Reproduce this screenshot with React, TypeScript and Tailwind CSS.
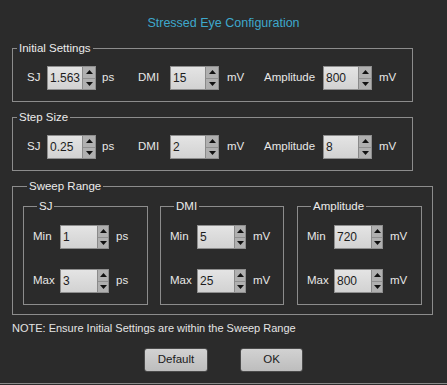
import React from 'react'

const font = { fontFamily: '"Liberation Sans", Arial, sans-serif' }

const Arrow = ({ down }: { down?: boolean }) => (
  <svg width="7" height="4" viewBox="0 0 7 4">
    {down ? <polygon points="0,0 7,0 3.5,4" fill="#111" /> : <polygon points="0,4 7,4 3.5,0" fill="#111" />}
  </svg>
)

// spin box: text part + up/down buttons
const Spin = ({ value, small }: { value: string; small?: boolean }) => (
  <div className="flex h-[24px] w-[49px] border border-[#8e8e8e]">
    <div className="flex flex-1 items-center bg-gradient-to-b from-[#e4e4e4] to-[#d2d2d2] pl-[2px] text-[12px] text-[#1c1c1c]">
      {value}
    </div>
    <div className={`flex flex-col border-l border-[#8a8a8a] bg-[#b0b0b0] ${small ? 'w-[11px]' : 'w-[13px]'}`}>
      <div className="flex flex-1 items-center justify-center border-b border-[#909090]">
        <Arrow />
      </div>
      <div className="flex flex-1 items-center justify-center">
        <Arrow down />
      </div>
    </div>
  </div>
)

const Legend = ({ children }: { children: React.ReactNode }) => (
  <legend className="ml-[4px] px-[2px] text-[11.5px] leading-[16px] text-[#ececec]">{children}</legend>
)

const SettingsRow = ({ sj, dmi, amp }: { sj: string; dmi: string; amp: string }) => (
  <div className="flex h-[24px] items-center pl-[14px] text-[11.5px] text-[#e8e8e8]">
    <span className="w-[20px]">SJ</span>
    <Spin value={sj} />
    <span className="ml-[6px] w-[36px]">ps</span>
    <span className="w-[32px]">DMI</span>
    <Spin value={dmi} />
    <span className="ml-[8px] w-[37px]">mV</span>
    <span className="w-[59px]">Amplitude</span>
    <Spin value={amp} />
    <span className="ml-[7px]">mV</span>
  </div>
)

const RangeRow = ({ label, value, unit }: { label: string; value: string; unit: string }) => (
  <div className="flex h-[24px] items-center text-[11.5px] text-[#e8e8e8]">
    <span className="w-[27px]">{label}</span>
    <Spin value={value} small />
    <span className="ml-[7px]">{unit}</span>
  </div>
)

const RangeGroup = ({ title, min, max, unit, w }: { title: string; min: string; max: string; unit: string; w: string }) => (
  <fieldset className={`border border-[#8c8c8c] pb-[11px] pl-[9px] ${w}`}>
    <Legend>{title}</Legend>
    <div className="flex flex-col gap-[20px] pt-[11px]">
      <RangeRow label="Min" value={min} unit={unit} />
      <RangeRow label="Max" value={max} unit={unit} />
    </div>
  </fieldset>
)

export default function App() {
  return (
    <div className="h-[385px] w-[447px] bg-[#2b2b2b]" style={font}>
      <div className="flex h-[384px] flex-col border-b border-[#8a8a8a]">
        <div className="mt-[13px] text-center text-[12.5px] leading-[20px] text-[#3ea8cc]">Stressed Eye Configuration</div>

        <fieldset className="ml-[12px] mt-[7px] w-[401px] border border-[#8c8c8c] pb-[11px]">
          <Legend>Initial Settings</Legend>
          <div className="pt-[10px]">
            <SettingsRow sj="1.563" dmi="15" amp="800" />
          </div>
        </fieldset>

        <fieldset className="ml-[12px] mt-[7px] w-[401px] border border-[#8c8c8c] pb-[11px]">
          <Legend>Step Size</Legend>
          <div className="pt-[10px]">
            <SettingsRow sj="0.25" dmi="2" amp="8" />
          </div>
        </fieldset>

        <fieldset className="ml-[12px] mt-[7px] w-[421px] border border-[#8c8c8c] pb-[9px] pl-[10px]">
          <Legend>Sweep Range</Legend>
          <div className="flex pt-[4px]">
            <RangeGroup title="SJ" min="1" max="3" unit="ps" w="w-[125px]" />
            <div className="ml-[12px]">
              <RangeGroup title="DMI" min="5" max="25" unit="mV" w="w-[124px]" />
            </div>
            <div className="ml-[13px]">
              <RangeGroup title="Amplitude" min="720" max="800" unit="mV" w="w-[125px]" />
            </div>
          </div>
        </fieldset>

        <div className="ml-[12px] mt-[5px] text-[11px] leading-[16px] text-[#e4e4e4]">
          NOTE: Ensure Initial Settings are within the Sweep Range
        </div>

        <div className="mt-[12px] flex justify-center gap-[32px]">
          <button className="h-[24px] w-[64px] rounded-[3px] border border-[#4a4a4a] bg-gradient-to-b from-[#d2d2d2] to-[#bdbdbd] text-[11.5px] text-[#1a1a1a]">
            Default
          </button>
          <button className="h-[24px] w-[63px] rounded-[3px] border border-[#4a4a4a] bg-gradient-to-b from-[#d2d2d2] to-[#bdbdbd] text-[11.5px] text-[#1a1a1a]">
            OK
          </button>
        </div>
      </div>
    </div>
  )
}
